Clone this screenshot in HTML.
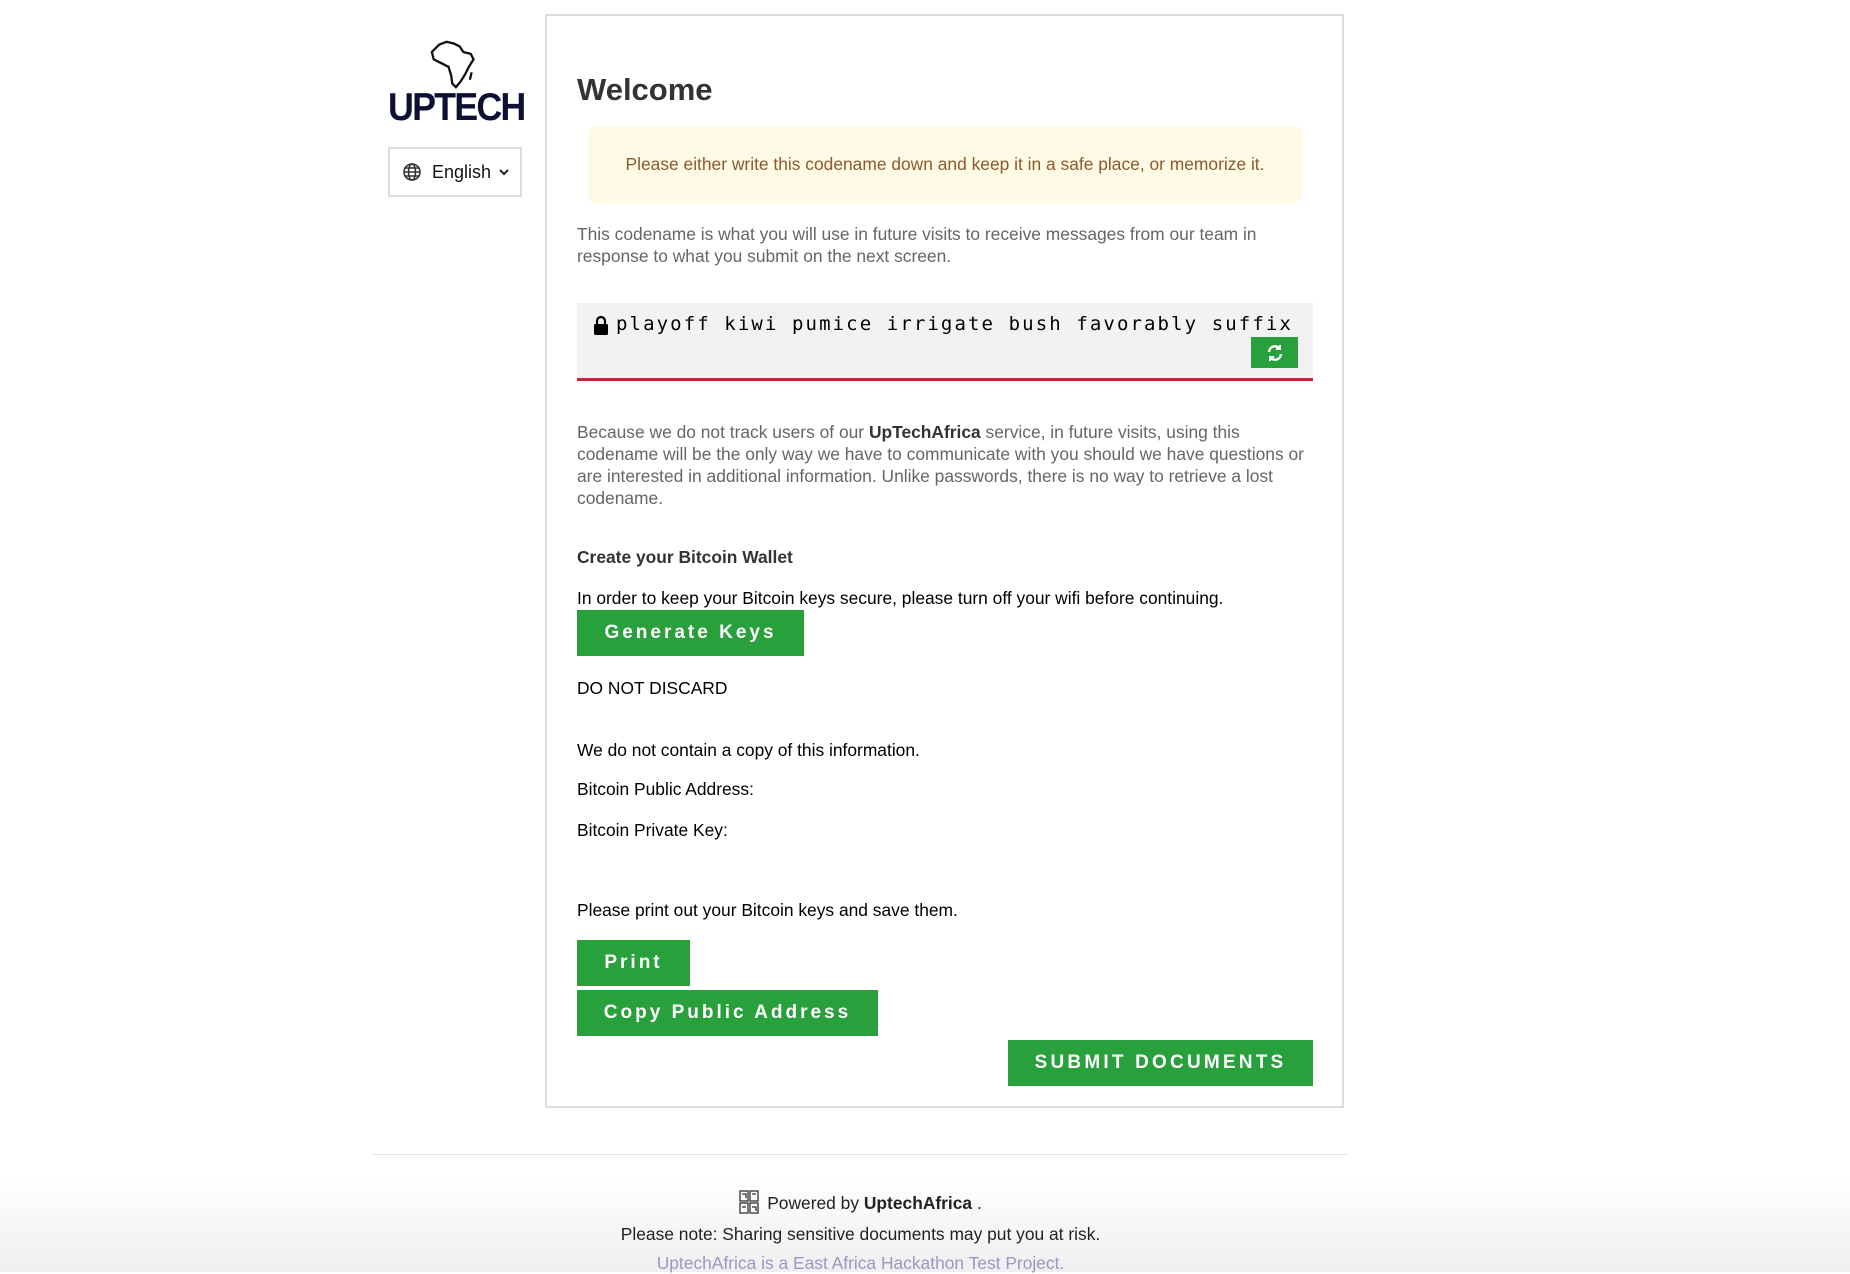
<!DOCTYPE html>
<html><head><meta charset="utf-8"><style>
*{box-sizing:border-box;margin:0;padding:0}
body{width:1850px;height:1272px;overflow:hidden;background:#fff;font-family:"Liberation Sans",sans-serif;color:#000;position:relative}
.abs{position:absolute}
.card{left:545px;top:14px;width:799px;height:1094px;border:2px solid #ddd}
.btn{position:absolute;background:#28a03c;color:#fff;font-weight:bold;font-size:19px;letter-spacing:3px;display:flex;align-items:center;justify-content:center}
.t{position:absolute;left:577px;font-size:17.4px;line-height:22px}
.g{color:#666}
.ft{position:absolute;left:372px;width:977px;text-align:center;font-size:17.4px;line-height:22px}
</style></head><body>
<svg class="abs" style="left:430px;top:38px" width="50" height="52" viewBox="0 0 54 54" fill="none" stroke="#111" stroke-width="2.5">
<path d="M10 6 L18 3 L26 5 L32 8 L36 14 L44 16 L47 22 L42 30 L38 38 L33 46 L28 52 L24 48 L23 40 L20 30 L12 26 L4 22 L2 14 Z"/>
<path d="M45 36 L43 44"/></svg>
<div class="abs" style="left:388px;top:86px;font-size:39px;font-weight:bold;color:#0d1033;letter-spacing:-2px;transform:scaleX(0.92);transform-origin:left">UPTECH</div>
<div class="abs" style="left:388px;top:147px;width:134px;height:50px;border:2px solid #ddd;display:flex;align-items:center;padding-left:12px;font-size:18px;color:#111">
<svg width="20" height="20" viewBox="0 0 20 20" fill="none" stroke="#333" stroke-width="1.6"><circle cx="10" cy="10" r="8"/><ellipse cx="10" cy="10" rx="3.5" ry="8"/><path d="M2 10H18M3.5 6H16.5M3.5 14H16.5"/></svg>
<span style="margin-left:10px">English</span><svg style="margin-left:8px" width="10" height="7" viewBox="0 0 10 7"><path d="M1 1l4 4 4-4" fill="none" stroke="#222" stroke-width="2"/></svg></div>
<div class="abs card"></div>
<div class="abs" style="left:577px;top:72px;font-size:31px;font-weight:bold;color:#333">Welcome</div>
<div class="abs" style="left:588px;top:126px;width:714px;height:77px;background:#fffae6;border-radius:8px;color:#8a5a2b;font-size:17.4px;display:flex;align-items:center;justify-content:center">Please either write this codename down and keep it in a safe place, or memorize it.</div>
<div class="t g" style="top:223px">This codename is what you will use in future visits to receive messages from our team in<br>response to what you submit on the next screen.</div>
<div class="abs" style="left:577px;top:303px;width:736px;height:78px;background:#f2f2f2;border-bottom:3px solid #b0303a"></div>
<svg class="abs" style="left:593px;top:315px" width="16" height="20" viewBox="0 0 16 20"><path d="M4 9V6a4 4 0 0 1 8 0v3" fill="none" stroke="#000" stroke-width="2.2"/><rect x="1" y="9" width="14" height="11" rx="1.5" fill="#000"/></svg>
<div class="abs" style="left:616px;top:313px;font-family:'DejaVu Sans Mono','Liberation Mono',monospace;font-size:19px;letter-spacing:2.1px">playoff kiwi pumice irrigate bush favorably suffix</div>
<div class="abs" style="left:1251px;top:337px;width:47px;height:31px;background:#28a03c;display:flex;align-items:center;justify-content:center">
<svg width="18" height="18" viewBox="0 0 18 18" fill="none" stroke="#fff" stroke-width="2.4"><path d="M3 8a6 6 0 0 1 11-3"/><path d="M15 10a6 6 0 0 1-11 3"/><path d="M14 1v4h-4M4 17v-4h4" stroke-width="2"/></svg></div>
<div class="t g" style="top:421px">Because we do not track users of our <b style="color:#333">UpTechAfrica</b> service, in future visits, using this<br>codename will be the only way we have to communicate with you should we have questions or<br>are interested in additional information. Unlike passwords, there is no way to retrieve a lost<br>codename.</div>
<div class="t" style="top:546px;font-weight:bold;color:#333">Create your Bitcoin Wallet</div>
<div class="t" style="top:587px">In order to keep your Bitcoin keys secure, please turn off your wifi before continuing.</div>
<div class="btn" style="left:577px;top:610px;width:227px;height:46px">Generate Keys</div>
<div class="t" style="top:677px">DO NOT DISCARD</div>
<div class="t" style="top:739px">We do not contain a copy of this information.</div>
<div class="t" style="top:778px">Bitcoin Public Address:</div>
<div class="t" style="top:819px">Bitcoin Private Key:</div>
<div class="t" style="top:899px">Please print out your Bitcoin keys and save them.</div>
<div class="btn" style="left:577px;top:940px;width:113px;height:46px">Print</div>
<div class="btn" style="left:577px;top:990px;width:301px;height:46px">Copy Public Address</div>
<div class="btn" style="left:1008px;top:1040px;width:305px;height:46px;letter-spacing:3.2px">SUBMIT DOCUMENTS</div>
<div class="abs" style="left:0;top:1175px;width:1850px;height:97px;background:linear-gradient(#fff,#efefef)"></div>
<div class="abs" style="left:372px;top:1154px;width:977px;height:1px;background:#e6e6f0"></div>
<div class="ft" style="top:1190px;color:#222">
<svg width="20" height="24" viewBox="0 0 20 24" fill="none" stroke="#333" stroke-width="1.3" style="vertical-align:-5px;margin-right:8px"><rect x="1" y="1" width="8" height="10"/><rect x="11" y="1" width="8" height="10"/><rect x="1" y="13" width="8" height="10"/><rect x="11" y="13" width="8" height="10"/><path d="M3 4h4v4M13 4h4M13 17h4v4M3 17h4"/></svg>Powered by <b>UptechAfrica</b> .</div>
<div class="ft" style="top:1223px;color:#222">Please note: Sharing sensitive documents may put you at risk.</div>
<div class="ft" style="top:1252px;color:#9a98c4">UptechAfrica is a East Africa Hackathon Test Project.</div>
</body></html>
